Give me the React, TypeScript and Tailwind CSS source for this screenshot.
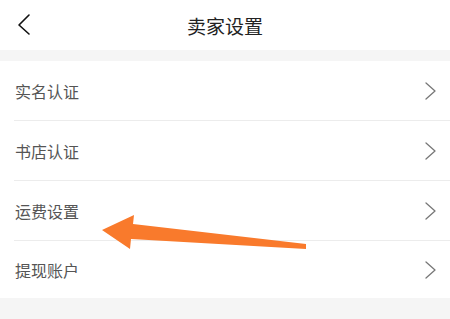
import React from "react";

const rows = ["实名认证", "书店认证", "运费设置", "提现账户"];

function Chevron() {
    return (
        <svg width="14" height="20" viewBox="0 0 14 20" fill="none">
            <path d="M2 2 L11 10 L2 18" stroke="#777" strokeWidth="1.3" strokeLinecap="round" strokeLinejoin="round" />
        </svg>
    );
}

export default function App() {
    return (
        <div
            className="relative w-[450px] h-[319px] bg-[#f5f5f5] overflow-hidden"
            style={{ fontFamily: '"Noto Sans CJK SC", "Noto Sans", sans-serif' }}
        >
            {/* Header */}
            <div className="relative h-[50px] bg-white flex items-center justify-center">
                <button className="absolute left-[14px] top-[11px] w-[20px] h-[28px] flex items-center justify-center">
                    <svg width="16" height="24" viewBox="0 0 16 24" fill="none">
                        <path d="M13 2 L3 12 L13 21" stroke="#111" strokeWidth="1.6" strokeLinecap="round" strokeLinejoin="round" />
                    </svg>
                </button>
                <span className="text-[19px] text-[#222] leading-none">卖家设置</span>
            </div>

            {/* List */}
            <div className="mt-[11px] bg-white">
                {rows.map((label, i) => (
                    <div key={label} className="pl-[14px]">
                        <div
                            className={`flex items-center justify-between pr-[12px] ${i < rows.length - 1 ? "h-[60px] border-b border-[#ececec]" : "h-[57px]"}`}
                        >
                            <span className="text-[16px] text-[#555] leading-none pl-[1px]">{label}</span>
                            <Chevron />
                        </div>
                    </div>
                ))}
            </div>

            {/* Annotation arrow */}
            <svg className="absolute left-0 top-0 pointer-events-none" width="450" height="319" viewBox="0 0 450 319">
                <polygon
                    points="102,230 134,215 133,224 306,244 306,249 131,239 130,249"
                    fill="#f97a2c"
                />
            </svg>
        </div>
    );
}
